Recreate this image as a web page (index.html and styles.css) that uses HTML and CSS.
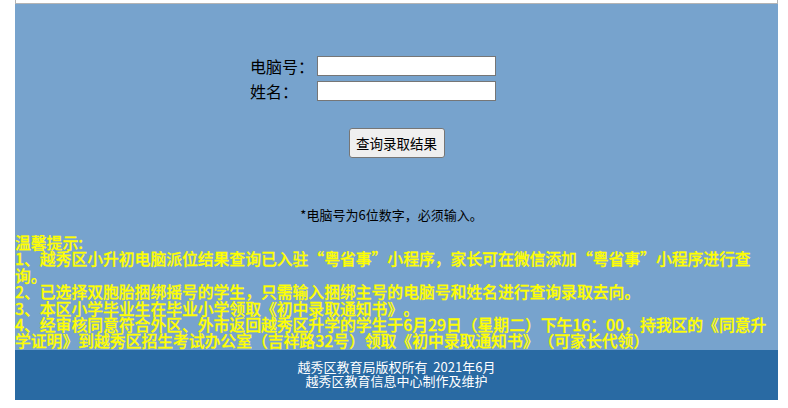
FILE: index.html
```html
<!DOCTYPE html>
<html lang="zh-CN">
<head>
<meta charset="utf-8">
<title>越秀区小升初电脑派位录取结果查询</title>
<link rel="stylesheet" href="styles.css">
</head>
<body>
<div class="page">
  <div class="topbar"></div>
  <main class="panel">
    <form class="form">
      <div class="row"><label class="label" for="pcno">电脑号：</label><input class="field" id="pcno" type="text"></div>
      <div class="row"><label class="label" for="name">姓名：</label><input class="field" id="name" type="text"></div>
      <div class="actions"><button class="btn" type="button">查询录取结果</button></div>
    </form>
    <p class="note">*电脑号为6位数字，必须输入。</p>
    <div class="tips">
      <div>温馨提示:</div>
      <div>1、越秀区小升初电脑派位结果查询已入驻“粤省事”小程序，家长可在微信添加“粤省事”小程序进行查询。</div>
      <div>2、已选择双胞胎捆绑摇号的学生，只需输入捆绑主号的电脑号和姓名进行查询录取去向。</div>
      <div>3、本区小学毕业生在毕业小学领取《初中录取通知书》。</div>
      <div>4、经审核同意符合外区、外市返回越秀区升学的学生于6月29日（星期二）下午16：00，持我区的《同意升学证明》到越秀区招生考试办公室（吉祥路32号）领取《初中录取通知书》（可家长代领）</div>
    </div>
  </main>
  <footer class="footer">
    <div>越秀区教育局版权所有&nbsp; 2021年6月</div>
    <div>越秀区教育信息中心制作及维护</div>
  </footer>
</div>
</body>
</html>
```
FILE: styles.css
```css
html, body {
  margin: 0;
  padding: 0;
  background: #ffffff;
}
body {
  font-family: "Noto Sans CJK SC", "Liberation Sans", sans-serif;
}
.page {
  width: 763px;
  margin-left: 15px;
}
.topbar {
  height: 3px;
  background: #ffffff;
  border: 1px solid #b4b4b4;
  border-top: none;
  box-sizing: content-box;
  width: 761px;
}
.panel {
  display: flex;
  flex-direction: column;
  background: #77a3cd;
  padding-top: 52px;
}
.form {
  display: flex;
  flex-direction: column;
  gap: 5px;
  margin: 0;
}
.row {
  display: flex;
  align-items: center;
  margin-left: 235px;
  height: 20px;
}
.label {
  width: 67px;
  font-size: 16px;
  line-height: 20px;
  color: #000000;
}
.field {
  box-sizing: border-box;
  width: 179px;
  height: 20px;
  margin: 0;
  border: 1px solid #767676;
  background: #ffffff;
  padding: 0 2px;
}
.actions {
  display: flex;
  justify-content: center;
  margin-top: 22px;
}
.btn {
  box-sizing: border-box;
  width: 96px;
  height: 30px;
  padding: 0;
  font-family: "Noto Sans CJK SC", sans-serif;
  font-size: 13.5px;
  color: #000000;
  background: #efefef;
  border: 1px solid #767676;
  border-radius: 3px;
}
.note {
  margin: 49px 0 0;
  padding-right: 10px;
  text-align: center;
  font-size: 13px;
  line-height: 16px;
  color: #000000;
}
.tips {
  margin-top: 12px;
  font-size: 15.8px;
  line-height: 16.4px;
  font-weight: 500;
  color: #ffff00;
  -webkit-text-stroke: 0.3px #ffff00;
  text-spacing-trim: space-all;
}
.footer {
  box-sizing: border-box;
  height: 50px;
  padding-top: 10px;
  background: #296aa3;
  color: #ffffff;
  text-align: center;
  font-size: 13px;
  line-height: 14px;
}
```
